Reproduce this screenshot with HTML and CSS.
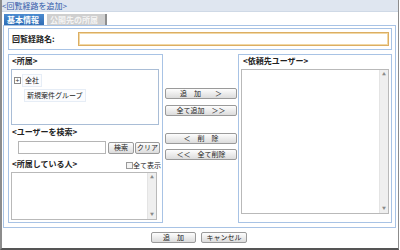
FILE: index.html
```html
<!DOCTYPE html>
<html lang="ja">
<head>
<meta charset="utf-8">
<link rel="stylesheet" href="styles.css">
</head>
<body>
<div class="window">
  <div class="titlebar">&lt;回覧経路を追加&gt;</div>
  <div class="tabs">
    <span class="tab active">基本情報</span>
    <span class="tab inactive">公開先の所属</span>
  </div>
  <div class="panel">
    <div class="namebox">
      <span class="name-label">回覧経路名:</span>
      <span class="name-input"></span>
    </div>
    <div class="columns">
      <div class="group group-left">
        <div class="ghead">&lt;所属&gt;</div>
        <div class="tree">
          <div class="tree-row">
            <span class="expander">+</span>
            <span class="node">全社</span>
          </div>
          <div class="tree-row child">
            <span class="node">新規案件グループ</span>
          </div>
        </div>
        <div class="ghead search-head">&lt;ユーザーを検索&gt;</div>
        <div class="search-row">
          <span class="search-input"></span>
          <span class="btn btn-search">検索</span>
          <span class="btn btn-clear">クリア</span>
        </div>
        <div class="members-head">
          <span class="ghead-text">&lt;所属している人&gt;</span>
          <span class="showall"><span class="checkbox"></span>全て表示</span>
        </div>
        <div class="listbox list-members">
          <div class="scrollbar"><span class="arrow">▲</span><span class="arrow">▼</span></div>
        </div>
      </div>
      <div class="mid">
        <span class="btn mbtn b1">追　加　　＞</span>
        <span class="btn mbtn b2">全て追加　＞＞</span>
        <span class="btn mbtn b3">＜　削　除</span>
        <span class="btn mbtn b4">＜＜　全て削除</span>
      </div>
      <div class="group group-right">
        <div class="ghead right-head">&lt;依頼先ユーザー&gt;</div>
        <div class="listbox list-targets">
          <div class="scrollbar"><span class="arrow">▲</span><span class="arrow">▼</span></div>
        </div>
      </div>
    </div>
  </div>
  <div class="footer">
    <span class="btn fbtn f-add">追　加</span>
    <span class="btn fbtn f-cancel">キャンセル</span>
  </div>
</div>
</body>
</html>
```

FILE: styles.css
```css
* { box-sizing: border-box; }
html, body { margin: 0; padding: 0; background: #ffffff; }
body {
  font-family: "Noto Sans CJK JP", "DejaVu Sans", sans-serif;
  font-size: 8px;
  color: #222;
}
.window {
  width: 399px;
  height: 250px;
  border-left: 2px solid #8c8c8c;
  border-right: 1px solid #8c8c8c;
  border-bottom: 2px solid #555555;
  background: #fff;
  display: flex;
  flex-direction: column;
}
.titlebar {
  height: 12px;
  line-height: 12px;
  background: #dfe6f0;
  color: #2f58a8;
  font-size: 8px;
  white-space: nowrap;
  border-bottom: 1px solid #cfd9e6;
}
.tabs {
  margin-top: 2px;
  height: 11px;
  padding-left: 2px;
  display: flex;
  gap: 3px;
}
.tab {
  height: 11px;
  line-height: 11px;
  font-weight: bold;
  font-size: 8px;
  padding: 0 3px;
  white-space: nowrap;
}
.tab.active {
  background: linear-gradient(#4c8bd0, #2f6db5);
  color: #fff;
  width: 40px;
}
.tab.inactive {
  background: #cfcfcf;
  color: #f4f4f4;
  width: 60px;
  border-right: 2px solid #8e8e8e;
}
.panel {
  margin-left: 1px;
  width: 393px;
  height: 203px;
  border: 1px solid #a8c3e5;
  padding: 2px 3px 4px 4px;
  display: flex;
  flex-direction: column;
}
.namebox {
  height: 22px;
  border: 1px solid #a8c3e5;
  display: flex;
  align-items: center;
}
.name-label {
  width: 69px;
  padding-left: 3px;
  font-weight: bold;
  font-size: 8px;
  line-height: 12px;
  white-space: nowrap;
}
.name-input {
  width: 311px;
  height: 14px;
  border: 1px solid #dcae62;
  box-shadow: inset 0 0 0 1px #f1d8a6;
  background: #fff;
}
.columns {
  margin-top: 4px;
  height: 169px;
  display: flex;
}
.group {
  border: 1px solid #a8c3e5;
  height: 169px;
  display: flex;
  flex-direction: column;
}
.group-left { width: 155px; }
.group-right { width: 154px; }
.ghead, .ghead-text {
  height: 12px;
  line-height: 12px;
  font-weight: bold;
  font-size: 8px;
  padding-left: 3px;
  white-space: nowrap;
}
.right-head { padding-left: 4px; }
.tree {
  margin: 2px 0 0 2px;
  width: 148px;
  height: 56px;
  border: 1px solid #a9bdd6;
  padding: 4px 0 0 2px;
}
.tree-row {
  display: flex;
  align-items: center;
  height: 13px;
  font-size: 7px;
}
.tree-row.child {
  margin-top: 2px;
  padding-left: 10px;
}
.expander {
  width: 7px;
  height: 7px;
  border: 1px solid #8a8a8a;
  font-size: 7px;
  line-height: 5px;
  text-align: center;
  color: #333;
  margin-right: 1px;
}
.node {
  border: 1px solid #e6edf6;
  background: #fbfcfe;
  padding: 0 2px;
  line-height: 11px;
  white-space: nowrap;
}
.search-head { margin-top: 1px; }
.search-row {
  margin-top: 3px;
  padding-left: 9px;
  display: flex;
  align-items: center;
  height: 13px;
}
.search-input {
  width: 88px;
  height: 13px;
  border: 1px solid #b5b5b5;
  background: #fff;
}
.btn {
  display: inline-flex;
  align-items: center;
  justify-content: center;
  height: 11px;
  border: 1px solid #9a9a9a;
  border-radius: 2px;
  background: linear-gradient(#fdfdfd, #dcdcdc);
  font-size: 7px;
  line-height: 9px;
  color: #222;
  white-space: nowrap;
}
.btn-search { width: 26px; margin-left: 2px; height: 12px; }
.btn-clear { width: 25px; margin-left: 1px; height: 12px; }
.members-head {
  margin-top: 4px;
  height: 12px;
  display: flex;
  justify-content: space-between;
  align-items: center;
}
.showall {
  display: flex;
  align-items: center;
  font-size: 7px;
  line-height: 9px;
  margin-right: 1px;
  margin-top: 2px;
}
.checkbox {
  width: 7px;
  height: 7px;
  border: 1px solid #9a9a9a;
  background: #f4f4f4;
  margin-right: 0;
}
.listbox {
  border: 1px solid #b9b9b9;
  background: #fff;
  display: flex;
  justify-content: flex-end;
}
.list-members {
  margin: 2px 0 0 2px;
  width: 146px;
  height: 48px;
}
.list-targets {
  margin: 2px 0 0 2px;
  width: 148px;
  height: 145px;
}
.scrollbar {
  width: 9px;
  height: 100%;
  background: #efefef;
  border-left: 1px solid #e4e4e4;
  display: flex;
  flex-direction: column;
  justify-content: space-between;
  align-items: center;
  padding: 2px 0;
}
.arrow {
  font-size: 4px;
  line-height: 5px;
  color: #8a8a8a;
}
.mid {
  width: 75px;
  display: flex;
  flex-direction: column;
  padding-left: 2px;
  padding-top: 34px;
}
.mbtn { width: 72px; }
.b2 { margin-top: 6px; }
.b3 { margin-top: 17px; }
.b4 { margin-top: 5px; }
.footer {
  display: flex;
  justify-content: center;
  gap: 5px;
  padding-top: 4px;
  padding-right: 2px;
}
.fbtn { height: 11px; }
.f-add { width: 45px; }
.f-cancel { width: 46px; }
```
